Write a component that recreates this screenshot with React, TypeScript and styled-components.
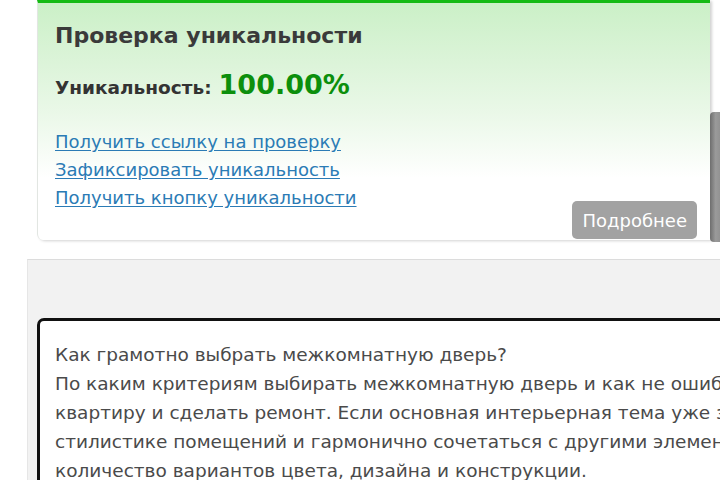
import React from "react";
import styled, { createGlobalStyle } from "styled-components";

const Global = createGlobalStyle`
  html, body { margin: 0; padding: 0; background: #fff; }
  body { font-family: "DejaVu Sans", Verdana, sans-serif; overflow: hidden; }
`;

const Page = styled.div`
  width: 720px;
  height: 480px;
  overflow: hidden;
  display: flex;
  flex-direction: column;
`;

const TopRow = styled.div`
  flex-shrink: 0;
  display: flex;
  align-items: flex-start;
  padding-left: 37px;
  height: 259px;
`;

const Card = styled.div`
  box-sizing: border-box;
  flex-shrink: 0;
  width: 673px;
  height: 240px;
  border-top: 3px solid #14bb14;
  border-left: 1px solid #e2e6e2;
  border-bottom-left-radius: 6px;
  box-shadow: 2px 1px 3px rgba(0, 0, 0, 0.18);
  background: linear-gradient(#cbf0c7 0px, #dcf4d9 60px, #eaf8e8 110px, #f7fcf6 150px, #ffffff 175px);
  padding: 20px 13px 0 17px;
  display: flex;
  flex-direction: column;
`;

const Title = styled.div`
  font-weight: bold;
  font-size: 22px;
  line-height: 26px;
  color: #3a3a3a;
`;

const ScoreRow = styled.div`
  margin-top: 20px;
  display: flex;
  align-items: baseline;
  gap: 7px;
`;

const ScoreLabel = styled.span`
  font-weight: bold;
  font-size: 18.5px;
  color: #333;
`;

const ScoreValue = styled.span`
  font-weight: bold;
  font-size: 27px;
  color: #0c8f0c;
`;

const Links = styled.div`
  margin-top: 28px;
  display: flex;
  flex-direction: column;
`;

const Link = styled.a`
  font-size: 18px;
  line-height: 28px;
  color: #2b7bb5;
  text-decoration: underline;
  text-underline-offset: 2px;
  cursor: pointer;
`;

const ButtonRow = styled.div`
  display: flex;
  justify-content: flex-end;
  margin-top: -11px;
`;

const MoreButton = styled.button`
  border: none;
  background: #a2a2a2;
  color: #fff;
  font-family: inherit;
  font-size: 18px;
  height: 38px;
  padding: 0 10px 0 11px;
  border-radius: 5px;
`;

const SideWidget = styled.div`
  flex-shrink: 0;
  margin-top: 112px;
  width: 14px;
  height: 130px;
  border-radius: 4px 0 0 4px;
  background: linear-gradient(90deg, #6e6e6e, #9a9a9a 40%, #8c8c8c);
`;

const GreyPanel = styled.div`
  flex-shrink: 0;
  margin-left: 27px;
  height: 240px;
  background: #f2f2f2;
  border-top: 1px solid #dcdcdc;
  border-left: 1px solid #e6e6e6;
  padding: 58px 0 0 9px;
`;

const TextBox = styled.div`
  box-sizing: border-box;
  width: 760px;
  background: #fff;
  border: 3px solid #111;
  border-radius: 7px;
  padding: 19px 0 20px 15px;
  color: #4a4a4a;
  font-size: 18.5px;
  line-height: 29px;
`;

const Line = styled.div`
  white-space: nowrap;
`;

const lines = [
  "Как грамотно выбрать межкомнатную дверь?",
  "По каким критериям выбирать межкомнатную дверь и как не ошибиться с выбором? Вы решили купить",
  "квартиру и сделать ремонт. Если основная интерьерная тема уже задана, двери должны соответствовать",
  "стилистике помещений и гармонично сочетаться с другими элементами интерьера. Сегодня существует",
  "количество вариантов цвета, дизайна и конструкции.",
];

export default function App() {
  return (
    <Page>
      <Global />
      <TopRow>
        <Card>
          <Title>Проверка уникальности</Title>
          <ScoreRow>
            <ScoreLabel>Уникальность:</ScoreLabel>
            <ScoreValue>100.00%</ScoreValue>
          </ScoreRow>
          <Links>
            <Link>Получить ссылку на проверку</Link>
            <Link>Зафиксировать уникальность</Link>
            <Link>Получить кнопку уникальности</Link>
          </Links>
          <ButtonRow>
            <MoreButton>Подробнее</MoreButton>
          </ButtonRow>
        </Card>
        <SideWidget />
      </TopRow>
      <GreyPanel>
        <TextBox>
          {lines.map((l, i) => (
            <Line key={i}>{l}</Line>
          ))}
        </TextBox>
      </GreyPanel>
    </Page>
  );
}
